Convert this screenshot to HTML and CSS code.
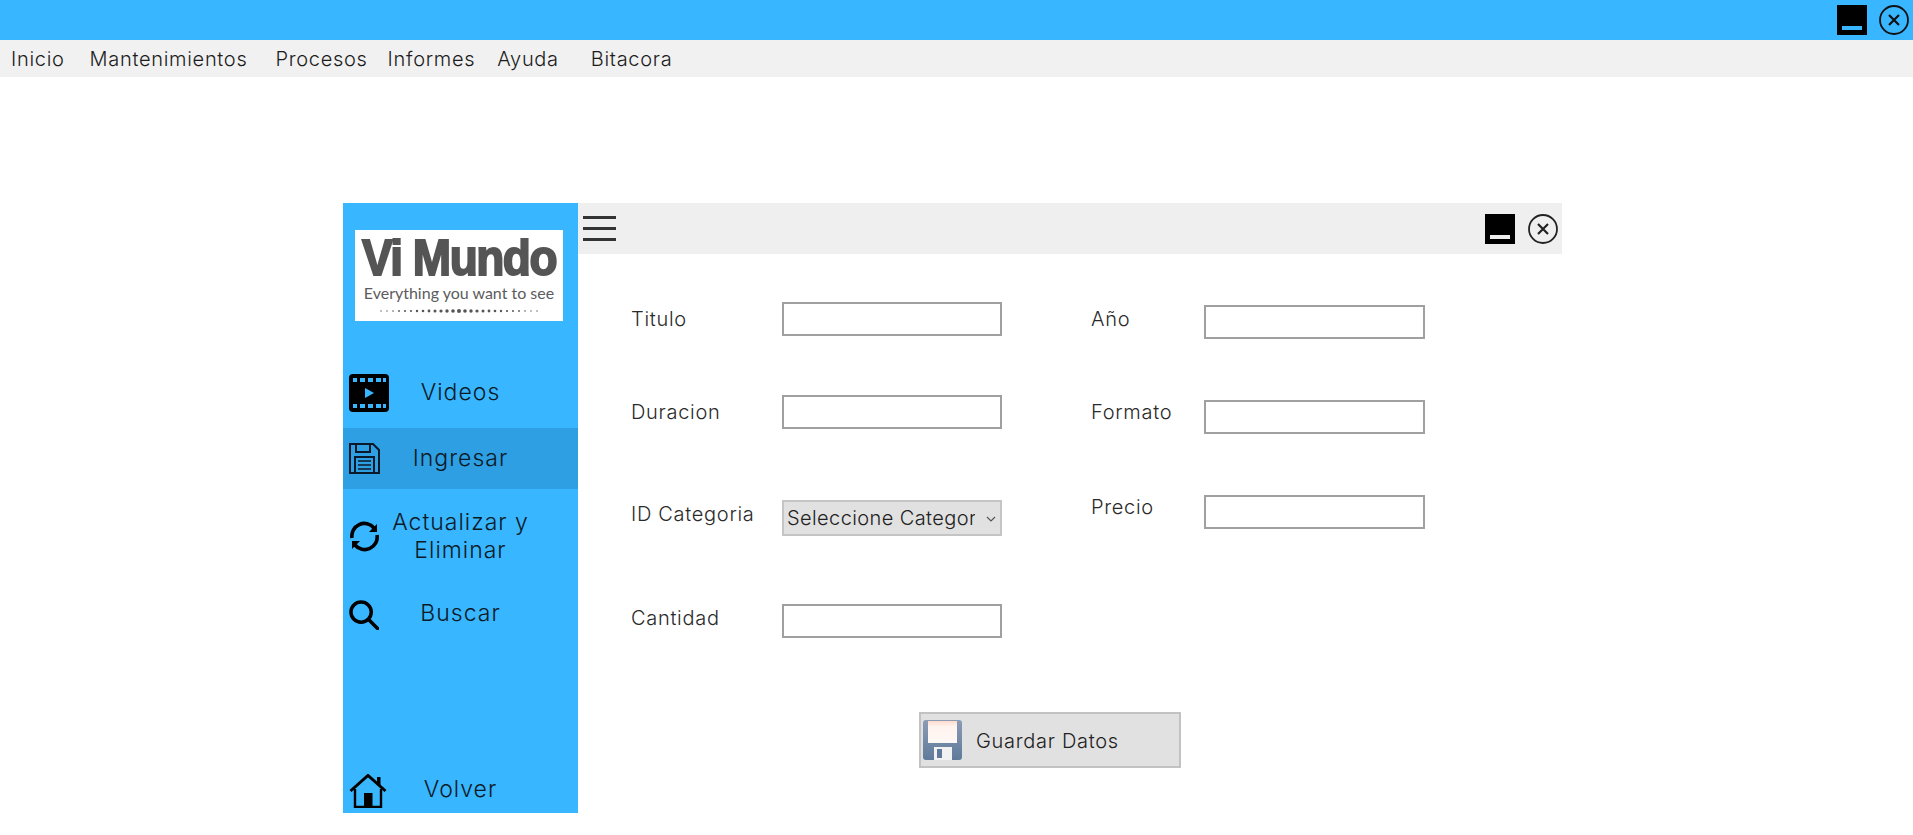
FILE: index.html
```html
<!DOCTYPE html>
<html lang="en">
<head>
  <meta charset="UTF-8">
  <title>Vi Mundo</title>
  <link rel="stylesheet" href="styles.css">
</head>
<body>
  <div class="topbar">
    <svg class="win-icon" viewBox="0 0 30 30"><rect width="30" height="30" fill="#000"/><rect x="5" y="21" width="20" height="4" fill="#38b6ff"/></svg>
    <svg class="win-icon" viewBox="0 0 30 30"><circle cx="15" cy="15" r="14" fill="none" stroke="#111" stroke-width="1.8"/><path d="M10 10l10 10M20 10L10 20" stroke="#111" stroke-width="2.2" fill="none"/></svg>
  </div>

  <nav class="menubar">
    <a class="m1">Inicio</a>
    <a class="m2">Mantenimientos</a>
    <a class="m3">Procesos</a>
    <a class="m4">Informes</a>
    <a class="m5">Ayuda</a>
    <a class="m6">Bitacora</a>
  </nav>

  <div class="workspace">
    <div class="window">
      <aside class="sidebar">
        <div class="logo">
          <span class="logo-title">Vi Mundo</span>
          <span class="logo-sub">Everything you want to see</span>
          <svg class="logo-dots" viewBox="0 0 160 4">
            <g fill="#555">
              <circle cx="2" cy="2" r=".7"/><circle cx="8" cy="2" r=".7"/><circle cx="14" cy="2" r=".8"/><circle cx="20" cy="2" r=".9"/><circle cx="26" cy="2" r="1"/><circle cx="32" cy="2" r="1.100"/><circle cx="38" cy="2" r="1.200"/><circle cx="44" cy="2" r="1.300"/><circle cx="50" cy="2" r="1.400"/><circle cx="56" cy="2" r="1.500"/><circle cx="62" cy="2" r="1.600"/><circle cx="68" cy="2" r="1.700"/><circle cx="74" cy="2" r="1.800"/><circle cx="80" cy="2" r="2"/><circle cx="86" cy="2" r="1.800"/><circle cx="92" cy="2" r="1.700"/><circle cx="98" cy="2" r="1.600"/><circle cx="104" cy="2" r="1.500"/><circle cx="110" cy="2" r="1.400"/><circle cx="116" cy="2" r="1.300"/><circle cx="122" cy="2" r="1.200"/><circle cx="128" cy="2" r="1.100"/><circle cx="134" cy="2" r="1"/><circle cx="140" cy="2" r=".9"/><circle cx="146" cy="2" r=".8"/><circle cx="152" cy="2" r=".7"/><circle cx="158" cy="2" r=".7"/>
            </g>
          </svg>
        </div>

        <a class="nav-item nav-videos">
          <svg class="nav-icon" width="40" height="38" viewBox="0 0 40 38">
            <rect width="40" height="38" rx="4" fill="#000"/>
            <g fill="#38b6ff">
              <rect x="4" y="4" width="4" height="4"/><rect x="11" y="4" width="5" height="4"/><rect x="19" y="4" width="5" height="4"/><rect x="27" y="4" width="5" height="4"/><rect x="34" y="4" width="3" height="4"/>
              <rect x="4" y="30" width="4" height="4"/><rect x="11" y="30" width="5" height="4"/><rect x="19" y="30" width="5" height="4"/><rect x="27" y="30" width="5" height="4"/><rect x="34" y="30" width="3" height="4"/>
              <path d="M16 14l9 5-9 5z"/>
            </g>
          </svg>
          <span>Videos</span>
        </a>

        <a class="nav-item nav-active">
          <svg class="nav-icon" width="31" height="31" viewBox="0 0 31 31" fill="none" stroke="#0b1a2a" stroke-width="2">
            <path d="M1 1h23l6 6v23H1z"/>
            <path d="M7 1v8h14V1"/>
            <path d="M6 30V14h19v16"/>
            <path d="M9 18h13M9 22h13M9 26h13" stroke-width="1.6"/>
          </svg>
          <span>Ingresar</span>
        </a>

        <a class="nav-item nav-tall">
          <svg class="nav-icon" width="31" height="31" viewBox="0 0 31 31" fill="none" stroke="#000" stroke-width="3.6">
            <path d="M3 17A12.500 12.500 0 0 1 25 7"/>
            <path d="M28 14A12.500 12.500 0 0 1 6 24"/>
            <path d="M28 3v8h-8z" fill="#000" stroke="none"/>
            <path d="M3 28v-8h8z" fill="#000" stroke="none"/>
          </svg>
          <span>Actualizar y<br>Eliminar</span>
        </a>

        <a class="nav-item">
          <svg class="nav-icon" width="30" height="30" viewBox="0 0 31 31" fill="none" stroke="#000" stroke-width="3.6">
            <circle cx="12.500" cy="12.500" r="10.500"/>
            <path d="M20 20l9.500 9.500" stroke-linecap="round"/>
          </svg>
          <span>Buscar</span>
        </a>

        <a class="nav-item nav-back">
          <svg class="nav-icon" width="38" height="34" viewBox="0 0 38 34">
            <path d="M1.500 17L19 1.500 36.500 17" fill="none" stroke="#000" stroke-width="3"/>
            <path d="M28 3h3.500v9L28 9z" fill="#000"/>
            <path d="M6 15v18h26V15" fill="none" stroke="#000" stroke-width="2.400"/>
            <rect x="15" y="19" width="8.500" height="14" fill="#000"/>
          </svg>
          <span>Volver</span>
        </a>
      </aside>

      <div class="content">
        <div class="titlebar">
          <div class="burger"><i></i><i></i><i></i></div>
          <div class="title-actions">
            <svg class="win-icon" viewBox="0 0 30 30"><rect width="30" height="30" fill="#000"/><rect x="5" y="21" width="20" height="4" fill="#efefef"/></svg>
            <svg class="win-icon" viewBox="0 0 30 30"><circle cx="15" cy="15" r="14" fill="none" stroke="#222" stroke-width="1.800"/><path d="M10 10l10 10M20 10L10 20" stroke="#222" stroke-width="2.200" fill="none"/></svg>
          </div>
        </div>

        <form class="form">
          <div class="columns">
            <div class="col col-left">
              <div class="field"><label>Titulo</label><input type="text"></div>
              <div class="field f-duracion"><label>Duracion</label><input type="text"></div>
              <div class="field f-categoria">
                <label>ID Categoria</label>
                <div class="select-wrap">
                  <select>
                    <option>Seleccione Categoria</option>
                  </select>
                  <svg class="chevron" width="10" height="6" viewBox="0 0 10 6"><path d="M1 1l4 4 4-4" fill="none" stroke="#555" stroke-width="1.200"/></svg>
                </div>
              </div>
              <div class="field f-cantidad"><label>Cantidad</label><input type="text"></div>
            </div>
            <div class="col col-right">
              <div class="field"><label>Año</label><input type="text"></div>
              <div class="field f-formato"><label>Formato</label><input type="text"></div>
              <div class="field f-precio"><label>Precio</label><input type="text"></div>
            </div>
          </div>

          <button type="button" class="save-btn">
            <svg width="39" height="40" viewBox="0 0 39 40">
              <defs>
                <linearGradient id="disk" x1="0" y1="0" x2="0" y2="1"><stop offset="0" stop-color="#8b9cb4"/><stop offset="1" stop-color="#5f7a9a"/></linearGradient>
                <linearGradient id="label" x1="0" y1="0" x2="0" y2="1"><stop offset="0" stop-color="#ffd9cc"/><stop offset=".25" stop-color="#fff3ee"/><stop offset="1" stop-color="#fff8f5"/></linearGradient>
              </defs>
              <rect width="39" height="40" rx="3" fill="url(#disk)"/>
              <rect x="5" y="1" width="29" height="22" fill="url(#label)"/>
              <rect x="11" y="27" width="18" height="13" fill="#f2f2f2"/>
              <rect x="14" y="29" width="5" height="9" fill="#5f7a9a"/>
            </svg>
            <span>Guardar Datos</span>
          </button>
        </form>
      </div>
    </div>
  </div>
</body>
</html>
```

FILE: styles.css
```css
body {
  margin: 0;
  background: #ffffff;
  font-family: 'Inter', 'Open Sans', sans-serif;
  font-weight: 300;
  color: #222;
  height: 835px;
  overflow: hidden;
}

.win-icon {
  width: 30px;
  height: 30px;
  display: block;
}

.topbar {
  height: 40px;
  background: #38b6ff;
  display: flex;
  justify-content: flex-end;
  align-items: center;
  gap: 12px;
  padding-right: 4px;
}

.menubar {
  height: 37px;
  background: #f1f1f1;
  display: flex;
  align-items: center;
  padding-left: 11px;
  font-size: 20px;
  letter-spacing: .7px;
  color: #1c1c1c;
}

.m2 { margin-left: 25px; }
.m3 { margin-left: 28px; }
.m4 { margin-left: 20px; }
.m5 { margin-left: 22px; }
.m6 { margin-left: 32px; }

.workspace {
  padding: 126px 0 0 343px;
}

.window {
  width: 1219px;
  height: 610px;
  display: flex;
}

/* side menu */
.sidebar {
  width: 235px;
  background: #38b6ff;
  display: flex;
  flex-direction: column;
  font-size: 23px;
  letter-spacing: 1px;
  color: #0c1a26;
}

.logo {
  width: 208px;
  height: 91px;
  margin: 27px 0 40px 12px;
  background: #fff;
  display: flex;
  flex-direction: column;
  align-items: center;
  letter-spacing: 0;
}

.logo-title {
  font-family: 'Liberation Sans', sans-serif;
  font-weight: 700;
  font-size: 46px;
  letter-spacing: -1.500px;
  line-height: 54px;
  color: #555;
  -webkit-text-stroke: 1.800px #555;
  transform: scaleY(1.1);
  white-space: nowrap;
}

.logo-sub {
  font-family: 'Lato', sans-serif;
  font-weight: 400;
  font-size: 16px;
  line-height: 18px;
  color: #5c5c5c;
  white-space: nowrap;
}

.logo-dots {
  width: 160px;
  height: 4px;
  margin-top: 7px;
}

.nav-item {
  height: 63px;
  flex-shrink: 0;
  display: flex;
  align-items: center;
  padding-left: 6px;
  position: relative;
  text-align: center;
}

.nav-item span {
  flex: 1;
  padding-right: 6px;
  padding-bottom: 4px;
  line-height: 28px;
}

.nav-icon {
  flex-shrink: 0;
  position: absolute;
  left: 6px;
}

.nav-videos {
  height: 64px;
  margin-bottom: 3px;
}

.nav-videos span {
  padding-bottom: 2px;
}

.nav-active {
  height: 61px;
  background: #2e9fe3;
}

.nav-active span {
  padding-bottom: 2px;
}

.nav-tall {
  height: 94px;
}

.nav-tall span {
  padding-bottom: 1px;
}

.nav-back {
  height: 44px;
  margin-top: auto;
}

.nav-back span {
  padding-bottom: 4px;
}

/* form area */
.content {
  flex: 1;
  display: flex;
  flex-direction: column;
}

.titlebar {
  height: 51px;
  background: #efefef;
  display: flex;
  justify-content: space-between;
  align-items: center;
  padding: 0 4px 0 5px;
}

.burger {
  display: flex;
  flex-direction: column;
  gap: 8px;
}

.burger i {
  display: block;
  width: 33px;
  height: 3px;
  background: #333;
}

.title-actions {
  display: flex;
  gap: 13px;
}

.form {
  font-size: 20px;
  letter-spacing: .7px;
  color: #2a2a2a;
}

.columns {
  display: flex;
}

.col-left {
  width: 461px;
  padding: 48px 0 0 53px;
  box-sizing: border-box;
  flex-shrink: 0;
  margin-right: 53px;
}

.col-right {
  padding-top: 51px;
}

.field {
  display: flex;
  align-items: center;
}

.col-left label {
  width: 151px;
  flex-shrink: 0;
}

.col-right label {
  width: 112px;
  flex-shrink: 0;
  margin-bottom: 6px;
  position: relative;
  left: -1px;
}

.field input {
  width: 220px;
  height: 34px;
  box-sizing: border-box;
  border: 2px solid #a0a0a0;
  background: #fff;
  padding: 0 6px;
  display: block;
}

.col-right input {
  width: 221px;
}

.f-duracion { margin-top: 59px; }
.f-categoria { margin-top: 71px; }
.f-cantidad { margin-top: 68px; }
.f-formato { margin-top: 61px; }
.f-precio { margin-top: 61px; }

.f-categoria label {
  margin-bottom: 8px;
}

.f-cantidad label {
  margin-bottom: 6px;
}

.f-formato label,
.f-precio label {
  margin-bottom: 10px;
}

.select-wrap {
  position: relative;
  width: 220px;
  height: 36px;
}

.select-wrap select {
  appearance: none;
  width: 100%;
  height: 100%;
  box-sizing: border-box;
  border: 2px solid #c4c4c4;
  background: #e1e1e1;
  padding: 0 25px 0 3px;
  font-family: inherit;
  font-weight: 300;
  font-size: 20px;
  letter-spacing: .4px;
  color: #222;
  display: block;
}

.chevron {
  position: absolute;
  right: 6px;
  top: 16px;
}

.save-btn {
  margin: 74px 0 0 341px;
  width: 262px;
  height: 56px;
  box-sizing: border-box;
  border: 2px solid #c2c2c2;
  background: #e1e1e1;
  display: flex;
  align-items: center;
  gap: 14px;
  padding: 0 0 0 2px;
  font-family: inherit;
  font-weight: 300;
  font-size: 20px;
  letter-spacing: .7px;
  color: #222;
}

.save-btn span {
  padding-top: 2px;
}
```
